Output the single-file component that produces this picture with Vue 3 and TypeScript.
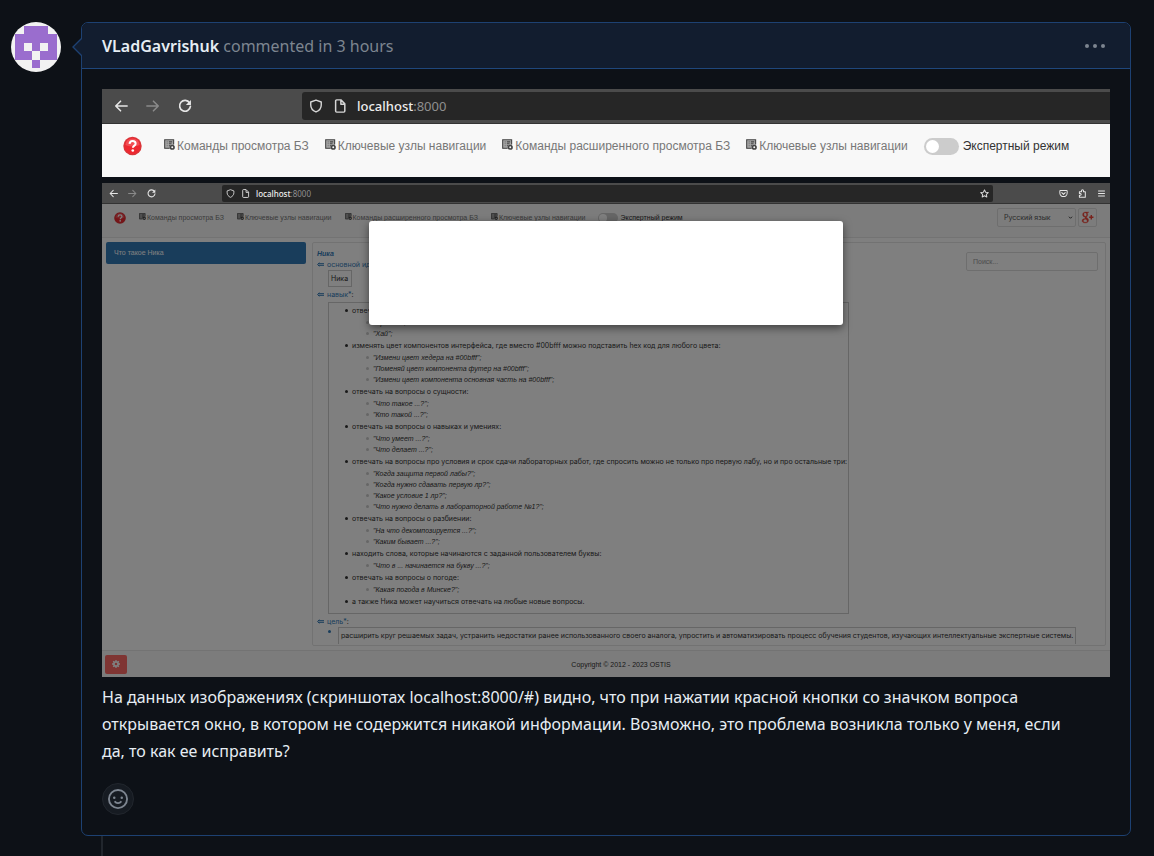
<script setup lang="ts">
interface Skill {
  text: string
  examples: string[]
}

const navLinks: string[] = [
  'Команды просмотра БЗ',
  'Ключевые узлы навигации',
  'Команды расширенного просмотра БЗ',
  'Ключевые узлы навигации',
]

const skills: Skill[] = [
  { text: 'отвечать на приветствие:', examples: ['"Привет";', '"Хай";'] },
  {
    text: 'изменять цвет компонентов интерфейса, где вместо #00bfff можно подставить hex код для любого цвета:',
    examples: [
      '"Измени цвет хедера на #00bfff";',
      '"Поменяй цвет компонента футер на #00bfff";',
      '"Измени цвет компонента основная часть на #00bfff";',
    ],
  },
  { text: 'отвечать на вопросы о сущности:', examples: ['"Что такое ...?";', '"Кто такой ...?";'] },
  { text: 'отвечать на вопросы о навыках и умениях:', examples: ['"Что умеет ...?";', '"Что делает ...?";'] },
  {
    text: 'отвечать на вопросы про условия и срок сдачи лабораторных работ, где спросить можно не только про первую лабу, но и про остальные три:',
    examples: [
      '"Когда защита первой лабы?";',
      '"Когда нужно сдавать первую лр?";',
      '"Какое условие 1 лр?";',
      '"Что нужно делать в лабораторной работе №1?";',
    ],
  },
  { text: 'отвечать на вопросы о разбиении:', examples: ['"На что декомпозируется ...?";', '"Каким бывает ...?";'] },
  { text: 'находить слова, которые начинаются с заданной пользователем буквы:', examples: ['"Что в ... начинается на букву ...?";'] },
  { text: 'отвечать на вопросы о погоде:', examples: ['"Какая погода в Минске?";'] },
  { text: 'а также Ника может научиться отвечать на любые новые вопросы.', examples: [] },
]
</script>

<template>
  <svg class="sprite" aria-hidden="true">
    <symbol id="i-back" viewBox="0 0 16 16"><path d="M15 8H2M7.500 2.500 2 8l5.500 5.500" fill="none" stroke="currentColor" stroke-width="1.800" stroke-linecap="round" stroke-linejoin="round" /></symbol>
    <symbol id="i-forward" viewBox="0 0 16 16"><path d="M1 8h13M8.500 2.500 14 8l-5.500 5.500" fill="none" stroke="currentColor" stroke-width="1.800" stroke-linecap="round" stroke-linejoin="round" /></symbol>
    <symbol id="i-reload" viewBox="0 0 16 16"><path d="M13.300 4.500A6.200 6.200 0 1 0 14.200 8.500" fill="none" stroke="currentColor" stroke-width="1.900" stroke-linecap="round" /><path d="M14.800 1v5.800H9z" fill="currentColor" /></symbol>
    <symbol id="i-shield" viewBox="0 0 16 16"><path d="M8 1.200 14 3.400v3.400c0 3.500-2.400 6.500-6 8-3.600-1.500-6-4.500-6-8V3.400z" fill="none" stroke="currentColor" stroke-width="1.600" stroke-linejoin="round" /></symbol>
    <symbol id="i-page" viewBox="0 0 16 16"><path d="M3 2.200C3 1.500 3.500 1 4.200 1H9l4.500 4.500v8.300c0 .7-.5 1.200-1.200 1.200H4.200C3.500 15 3 14.500 3 13.800zM9 1.500V6h4.500" fill="none" stroke="currentColor" stroke-width="1.700" stroke-linejoin="round" /></symbol>
    <symbol id="i-list" viewBox="0 0 16 16"><path d="M1 1h13v9H9v4H1z" fill="#aaa" /><path d="M8 13.500H1V1h13v7M4 4.200h1M7 4.200h5M4 7h1M7 7h4M4 9.800h1M7 9.800h2" fill="none" stroke="currentColor" stroke-width="1.600" /><circle cx="12" cy="12" r="2.600" fill="none" stroke="currentColor" stroke-width="2.400" /></symbol>
    <symbol id="i-help" viewBox="0 0 20 20"><circle cx="10" cy="10" r="9.700" fill="#d9363a" /><circle cx="10" cy="10" r="8.300" fill="#ee2830" /><path d="M2.500 9a7.500 7 0 0 1 15 0c-3 2-12 2-15 0z" fill="#f5686c" opacity=".6" /><path d="M6.900 7.800c.1-2 1.400-3 3.200-3 1.900 0 3.200 1 3.200 2.700 0 2.100-2.900 2.200-2.900 4.400" fill="none" stroke="#fff" stroke-width="2.100" /><circle cx="10.300" cy="14.700" r="1.400" fill="#fff" /></symbol>
    <symbol id="i-star" viewBox="0 0 16 16"><path d="m8 1.500 2 4.200 4.600.6-3.300 3.200.8 4.600L8 11.900l-4.100 2.200.8-4.600L1.400 6.300 6 5.700z" fill="none" stroke="currentColor" stroke-width="1.800" stroke-linejoin="round" /></symbol>
    <symbol id="i-pocket" viewBox="0 0 16 16"><path d="M2.500 2.500h11c.6 0 1 .4 1 1V7a6.500 6.500 0 0 1-13 0V3.500c0-.6.400-1 1-1zM5 6.500l3 3 3-3" fill="none" stroke="currentColor" stroke-width="1.800" stroke-linecap="round" stroke-linejoin="round" /></symbol>
    <symbol id="i-puzzle" viewBox="0 0 16 16"><path d="M2.500 5h3.700V3.200a1.800 1.800 0 0 1 3.600 0V5H13v9.500H2.500V11h1.700a1.500 1.500 0 0 0 0-3H2.500z" fill="none" stroke="currentColor" stroke-width="1.800" stroke-linejoin="round" /></symbol>
    <symbol id="i-menu" viewBox="0 0 16 16"><path d="M2 3.500h12M2 8h12M2 12.500h12" stroke="currentColor" stroke-width="1.900" /></symbol>
    <symbol id="i-chevron" viewBox="0 0 16 16"><path d="m3 5.500 5 5 5-5" fill="none" stroke="currentColor" stroke-width="3" /></symbol>
    <symbol id="i-arrow" viewBox="0 0 12 8"><path d="M2 2.600h10M2 5.400h10M4 .8 1 4l3 3.200" fill="none" stroke="currentColor" stroke-width="1.700" /></symbol>
    <symbol id="i-gplus" viewBox="0 0 24 24"><path d="M14.500 2H8.300C5 2 3 4 3 6.700c0 2.600 1.900 4.300 4.800 4.300-.8 1.300-.5 2 .4 2.900-3.800 0-6.200 1.600-6.200 4.200 0 2.500 2.400 4 5.700 4 4 0 6.300-2.100 6.300-4.900 0-4-3.900-4.100-3.900-5.800 0-1.200 2.400-1.700 2.400-4.700 0-1.700-.6-2.800-1.500-3.600h1.900zM8 9.900C6.500 9.900 5.300 8.300 5.300 6S6.400 3 7.800 3c1.600 0 2.600 1.700 2.600 3.900 0 2-1 3-2.400 3zm.5 11c-2.500 0-4.100-1.100-4.100-2.900s1.600-2.900 4-2.900c1.800.9 3 1.800 3 3.200 0 1.600-1.100 2.600-2.900 2.600z" fill="currentColor" stroke="currentColor" stroke-width=".6" fill-rule="evenodd" /><path d="M15 11.500h8M19 7.500v8" stroke="currentColor" stroke-width="2.600" /></symbol>
    <symbol id="i-gear" viewBox="0 0 16 16"><circle cx="8" cy="8" r="4.300" fill="none" stroke="currentColor" stroke-width="3.600" /><path d="M8 0v3M8 13v3M0 8h3M13 8h3M2.300 2.300l2 2M11.700 11.700l2 2M2.300 13.700l2-2M11.700 4.300l2-2" stroke="currentColor" stroke-width="2.600" /></symbol>
    <symbol id="i-smile" viewBox="0 0 16 16"><path fill="currentColor" d="M8 0a8 8 0 1 1 0 16A8 8 0 0 1 8 0ZM1.500 8a6.500 6.500 0 1 0 13 0 6.500 6.500 0 0 0-13 0Zm3.820 1.636a.75.75 0 0 1 1.038.175l.007.009c.103.118.22.222.35.31.264.178.683.370 1.285.370.602 0 1.020-.192 1.285-.371.130-.088.247-.192.350-.310l.007-.008a.75.75 0 0 1 1.222.870l-.022-.015c.020.013.021.015.021.015v.001l-.001.002-.002.003-.005.007-.014.019a2.066 2.066 0 0 1-.184.213c-.160.166-.338.316-.530.445-.630.418-1.370.638-2.127.629-.946 0-1.652-.308-2.126-.630a3.331 3.331 0 0 1-.715-.657l-.014-.020-.005-.006-.002-.003v-.002h-.001l.613-.432-.614.430a.75.75 0 0 1 .184-1.044ZM12 7a1 1 0 1 1-2 0 1 1 0 0 1 2 0ZM5 8a1 1 0 1 1 0-2 1 1 0 0 1 0 2Z" /></symbol>
  </svg>

  <main class="timeline">
    <a class="avatar" href="#" aria-label="VLadGavrishuk">
      <svg viewBox="0 0 50 50">
        <rect width="50" height="50" fill="#f2f2f2" />
        <path fill="#9a6dce" fill-rule="evenodd" d="M13 4h24v8h9v26H4V12h9zM13 21v8h8v-8zM29 21v8h8v-8zM21 29v9h8v-9z" />
        <path fill="#9a6dce" d="M21 38h8v8h-8z" />
      </svg>
    </a>

    <article class="comment">
      <svg class="pointer" viewBox="0 0 10 18"><path d="M10 0 1 9l9 9" fill="#121d2f" stroke="#1d4172" stroke-width="1.400" /></svg>
      <header class="comment-head">
        <p><a class="author" href="#">VLadGavrishuk</a> commented in 3 hours</p>
        <button class="more" type="button" aria-label="Menu"><i></i><i></i><i></i></button>
      </header>

      <div class="comment-body">
        <section class="shot shot-large">
          <div class="toolbar">
            <div class="tools">
              <svg><use href="#i-back" /></svg>
              <svg class="off"><use href="#i-forward" /></svg>
              <svg><use href="#i-reload" /></svg>
            </div>
            <div class="address">
              <svg><use href="#i-shield" /></svg>
              <svg><use href="#i-page" /></svg>
              <span><b>localhost</b>:8000</span>
            </div>
          </div>
          <nav class="navbar">
            <button class="help" type="button" aria-label="?"><svg><use href="#i-help" /></svg></button>
            <a v-for="(link, i) in navLinks" :key="i" class="nav-link" href="#"><svg><use href="#i-list" /></svg>{{ link }}</a>
            <label class="toggle"><input type="checkbox" />Экспертный режим</label>
          </nav>
        </section>

        <section class="shot shot-small">
          <div class="toolbar">
            <div class="tools">
              <svg><use href="#i-back" /></svg>
              <svg class="off"><use href="#i-forward" /></svg>
              <svg><use href="#i-reload" /></svg>
            </div>
            <div class="address">
              <svg><use href="#i-shield" /></svg>
              <svg><use href="#i-page" /></svg>
              <span><b>localhost</b>:8000</span>
              <svg class="star"><use href="#i-star" /></svg>
            </div>
            <div class="tools tools-end">
              <svg><use href="#i-pocket" /></svg>
              <svg><use href="#i-puzzle" /></svg>
              <svg><use href="#i-menu" /></svg>
            </div>
          </div>

          <div class="page">
            <nav class="navbar">
              <button class="help" type="button" aria-label="?"><svg><use href="#i-help" /></svg></button>
              <a v-for="(link, i) in navLinks" :key="i" class="nav-link" href="#"><svg><use href="#i-list" /></svg>{{ link }}</a>
              <label class="toggle"><input type="checkbox" />Экспертный режим</label>
              <div class="nav-end">
                <div class="lang">
                  <select aria-label="Язык"><option>Русский язык</option></select>
                  <svg><use href="#i-chevron" /></svg>
                </div>
                <button class="gplus" type="button" aria-label="Google+"><svg><use href="#i-gplus" /></svg></button>
              </div>
            </nav>

            <div class="columns">
              <aside><a class="history" href="#">Что такое Ника</a></aside>
              <div class="panel">
                <div class="article">
                  <a class="title" href="#">Ника</a>
                  <div class="relation"><svg><use href="#i-arrow" /></svg><a href="#">основной идентификатор*</a>:</div>
                  <div class="framed name">Ника</div>
                  <div class="relation"><svg><use href="#i-arrow" /></svg><a href="#">навык*</a>:</div>
                  <div class="framed skills">
                    <ul>
                      <li v-for="(skill, i) in skills" :key="i">
                        {{ skill.text }}
                        <ul v-if="skill.examples.length">
                          <li v-for="example in skill.examples" :key="example">{{ example }}</li>
                        </ul>
                      </li>
                    </ul>
                  </div>
                  <div class="relation"><svg><use href="#i-arrow" /></svg><a href="#">цель*</a>:</div>
                  <div class="goal">
                    <i></i>
                    <p class="framed">расширить круг решаемых задач, устранить недостатки ранее использованного своего аналога, упростить и автоматизировать процесс обучения студентов, изучающих интеллектуальные экспертные системы.</p>
                  </div>
                </div>
                <input class="search" type="text" placeholder="Поиск..." aria-label="Поиск" />
              </div>
            </div>

            <footer class="footer">
              <button type="button" aria-label="Настройки"><svg><use href="#i-gear" /></svg></button>
              <span>Copyright © 2012 - 2023 OSTIS</span>
            </footer>
            <div class="backdrop"><div class="dialog" role="dialog"></div></div>
          </div>
        </section>

        <p class="message">На данных изображениях (скриншотах localhost:8000/#) видно, что при нажатии красной кнопки со значком вопроса открывается окно, в котором не содержится никакой информации. Возможно, это проблема возникла только у меня, если да, то как ее исправить?</p>
        <button class="react" type="button" aria-label="Реакция"><svg><use href="#i-smile" /></svg></button>
      </div>
    </article>
    <div class="thread"></div>
  </main>
</template>

<style>
body {
  margin: 0;
  background: #0d1117;
}
</style>

<style scoped>
* {
  box-sizing: border-box;
}
p,
ul {
  margin: 0;
  padding: 0;
}
a {
  color: inherit;
  text-decoration: none;
}
button {
  padding: 0;
  border: 0;
  background: none;
  font: inherit;
  color: inherit;
}
svg {
  display: block;
  flex: none;
}
.sprite {
  position: absolute;
  width: 0;
  height: 0;
}
.timeline {
  display: grid;
  grid-template-columns: 50px minmax(0, 1fr);
  column-gap: 20px;
  padding: 22px 23px 0 11px;
  font-family: "Noto Sans", sans-serif;
  color: #e6edf3;
}
.avatar svg {
  width: 50px;
  height: 50px;
  border-radius: 50%;
}
.comment {
  position: relative;
  border: 1px solid #1d4172;
  border-radius: 7px;
}
.pointer {
  position: absolute;
  left: -10px;
  top: 15px;
  width: 10px;
  height: 18px;
}
.comment-head {
  display: flex;
  align-items: center;
  justify-content: space-between;
  height: 46px;
  padding: 0 25px 0 20px;
  border-bottom: 1px solid #1f477c;
  border-radius: 6px 6px 0 0;
  background: #121d2f;
  font-size: 16px;
  color: #7d8590;
}
.author {
  font-weight: 600;
  color: #e6edf3;
}
.more {
  display: flex;
  gap: 4px;
}
.more i {
  width: 4px;
  height: 4px;
  border-radius: 50%;
  background: #7d8590;
}
.comment-body {
  padding: 20px;
}
.message {
  margin-top: 7px;
  padding-right: 32px;
  font-size: 16px;
  line-height: 27px;
}
.react {
  display: grid;
  place-items: center;
  width: 32px;
  height: 32px;
  margin-top: 18px;
  border: 1px solid #21262d;
  border-radius: 50%;
  background: #161b22;
  color: #7d8590;
}
.react svg {
  width: 20px;
  height: 20px;
}
.thread {
  grid-column: 2;
  width: 2px;
  height: 20px;
  margin-left: 20px;
  background: #21262d;
}

/* Browser windows */
.shot {
  overflow: hidden;
  background: #fff;
  font-family: "Liberation Sans", Arial, sans-serif;
  color: #333;
}
.toolbar {
  display: flex;
  background: #4b4b4b;
  border-bottom: 1px solid #333;
  font-family: "Noto Sans", sans-serif;
  color: #e6e6e6;
}
.tools {
  display: flex;
  align-items: center;
}
.off {
  color: #8a8a8a;
}
.address {
  display: flex;
  flex: 1;
  align-items: center;
  background: #262626;
  color: #8f8f8f;
}
.address b {
  font-weight: 500;
  color: #ededed;
}
.address svg {
  color: #d6d6d6;
}
.navbar {
  display: flex;
  background: #f8f8f8;
  white-space: nowrap;
}
.nav-link {
  display: flex;
  color: #777;
}
.nav-link svg {
  color: #444;
}
.toggle {
  display: flex;
  align-items: center;
}
.toggle input {
  display: flex;
  align-items: center;
  appearance: none;
  margin: 0;
  background: #ccc;
}
.toggle input::before {
  content: "";
  border-radius: 50%;
  background: #fff;
}

.shot-large .toolbar {
  height: 35px;
  padding: 3px 0 3px 12px;
}
.shot-large .tools {
  width: 188px;
  gap: 18px;
}
.shot-large .tools svg {
  width: 14px;
  height: 14px;
}
.shot-large .address {
  gap: 10px;
  padding-left: 7px;
  border-radius: 3px 0 0 3px;
  font-size: 13px;
}
.shot-large .address svg {
  width: 14px;
  height: 14px;
}
.shot-large .navbar {
  height: 53px;
  padding: 12px 21px;
  gap: 16px;
  font-size: 12px;
  line-height: 21px;
}
.shot-large .help {
  height: 20px;
  margin-right: 6px;
}
.shot-large .help svg {
  width: 19px;
  height: 20px;
}
.shot-large .nav-link {
  height: 21px;
  gap: 2px;
}
.shot-large .nav-link svg {
  width: 11px;
  height: 11px;
  margin-top: 3px;
}
.shot-large .toggle {
  height: 21px;
  gap: 4px;
}
.shot-large .toggle input {
  width: 35px;
  height: 17px;
  padding: 2px;
  border-radius: 9px;
}
.shot-large .toggle input::before {
  width: 13px;
  height: 13px;
}

.shot-small {
  margin-top: 6px;
  font-size: 7px;
  line-height: 11px;
}
.shot-small .toolbar {
  height: 21px;
  padding: 2px 4px 1px 7px;
}
.shot-small .tools {
  width: 113px;
  gap: 10px;
}
.shot-small .toolbar svg {
  width: 9px;
  height: 9px;
}
.shot-small .tools-end {
  justify-content: flex-end;
}
.shot-small .address {
  gap: 6px;
  padding: 0 4px;
  border-radius: 2px;
  font-size: 8px;
}
.shot-small .star {
  margin-left: auto;
}
.page {
  position: relative;
  background: #fff;
}
.shot-small .navbar {
  height: 34px;
  padding: 4px 13px 0 12px;
  gap: 13px;
  border-bottom: 1px solid #e7e7e7;
  font-size: 7px;
  line-height: 19px;
}
.shot-small .help {
  height: 19px;
}
.shot-small .help svg {
  width: 12px;
  height: 12px;
}
.shot-small .nav-link {
  height: 19px;
  gap: 1px;
}
.shot-small .nav-link svg {
  width: 7px;
  height: 7px;
  margin-top: 5px;
}
.shot-small .toggle {
  height: 19px;
  gap: 2px;
}
.shot-small .toggle input {
  width: 20px;
  height: 10px;
  padding: 1px;
  border-radius: 5px;
}
.shot-small .toggle input::before {
  width: 8px;
  height: 8px;
}
.nav-end {
  display: flex;
  align-items: flex-start;
  gap: 2px;
  margin-left: auto;
}
.lang {
  display: grid;
  align-items: center;
}
.lang select,
.lang svg {
  grid-area: 1 / 1;
}
.lang select {
  appearance: none;
  width: 79px;
  height: 19px;
  padding: 0 6px;
  border: 1px solid #ddd;
  border-radius: 2px;
  background: none;
  font: 7px Inter, "Liberation Sans", sans-serif;
  color: #555;
}
.lang svg {
  justify-self: end;
  width: 5px;
  height: 5px;
  margin-right: 3px;
}
.gplus {
  display: grid;
  place-items: center;
  width: 19px;
  height: 19px;
  border: 1px solid #ddd;
  border-radius: 2px;
  color: #f04438;
}
.gplus svg {
  width: 13px;
  height: 13px;
}
.columns {
  display: grid;
  grid-template-columns: 200px minmax(0, 1fr);
  gap: 6px;
  padding: 4px;
}
.history {
  display: block;
  padding: 0 8px;
  border-radius: 2px;
  background: #337ab7;
  line-height: 22px;
  color: #fff;
}
.panel {
  display: flex;
  align-items: flex-start;
  height: 404px;
  padding: 5px 7px 0 4px;
  border: 1px solid #e4e4e4;
  border-radius: 2px;
}
.article {
  flex: 1;
  min-width: 0;
  font-family: Inter, "Liberation Sans", sans-serif;
  white-space: nowrap;
}
.title {
  display: block;
  font-family: "Liberation Sans", Arial, sans-serif;
  font-weight: 700;
  font-style: italic;
  color: #337ab7;
}
.relation {
  display: flex;
  align-items: center;
}
.relation a,
.relation svg {
  color: #337ab7;
}
.relation svg {
  width: 7px;
  height: 5px;
  margin-right: 3px;
}
.framed {
  border: 1px solid #ccc;
}
.name {
  width: 24px;
  margin: 0 0 2px 11px;
  padding: 2px;
}
.skills {
  width: 521px;
  height: 312px;
  margin: 2px 0 2px 11px;
  padding: 2px 0 0 16px;
}
.skills ul {
  list-style: none;
}
.skills li::before {
  content: "";
  display: inline-block;
  width: 3px;
  height: 3px;
  margin-right: 4px;
  border-radius: 50%;
  background: #333;
  vertical-align: 1px;
}
.skills ul ul {
  margin: 1px 0 1px 21px;
  font-family: "Liberation Sans", Arial, sans-serif;
  font-style: italic;
}
.skills ul ul li::before {
  background: #ccc;
}
.goal {
  display: flex;
  align-items: flex-start;
}
.goal i {
  flex: none;
  width: 3px;
  height: 3px;
  margin: 3px 7px 0 11px;
  border-radius: 50%;
  background: #337ab7;
}
.goal p {
  height: 17px;
  padding: 2px;
  border-bottom: 0;
}
.search {
  flex: none;
  width: 132px;
  height: 19px;
  margin-top: 4px;
  padding: 0 6px;
  border: 1px solid #ddd;
  border-radius: 2px;
  background: none;
  font: 7px "Liberation Sans", Arial, sans-serif;
}
.search::placeholder {
  color: #999;
}
.footer {
  display: grid;
  grid-template-columns: 52px 1fr 22px;
  align-items: center;
  height: 27px;
  padding: 0 3px;
  border-top: 1px solid #e7e7e7;
  background: #f8f8f8;
  text-align: center;
}
.footer button {
  display: grid;
  place-items: center;
  width: 22px;
  height: 19px;
  border-radius: 2px;
  background: #ff6a66;
  color: #fff;
}
.footer svg {
  width: 8px;
  height: 8px;
}
.backdrop {
  position: absolute;
  inset: 0;
  background: rgba(0, 0, 0, 0.5);
}
.dialog {
  width: 47%;
  height: 104px;
  margin: 17px auto 0;
  border-radius: 3px;
  background: #fff;
  box-shadow: 0 3px 8px rgba(0, 0, 0, 0.5);
}
</style>
